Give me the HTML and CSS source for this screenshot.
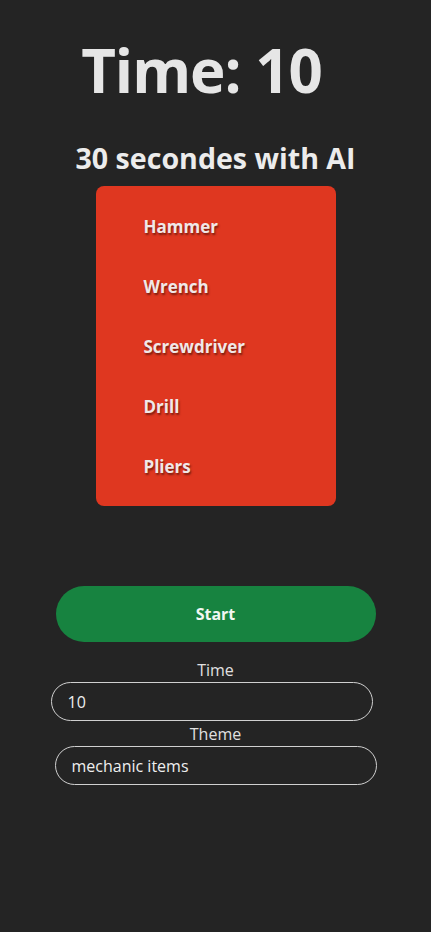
FILE: index.html
```html
<!DOCTYPE html>
<html lang="en">
<head>
<meta charset="utf-8">
<title>30 secondes with AI</title>
<link rel="stylesheet" href="styles.css">
</head>
<body>
<main class="app">
  <h1 class="timer">Time: 10</h1>
  <h2 class="subtitle">30 secondes with AI</h2>
  <ul class="card">
    <li class="item">Hammer</li>
    <li class="item">Wrench</li>
    <li class="item">Screwdriver</li>
    <li class="item">Drill</li>
    <li class="item">Pliers</li>
  </ul>
  <button class="start">Start</button>
  <form class="settings">
    <label class="label" for="time">Time</label>
    <input class="field field-time" id="time" type="text" value="10">
    <label class="label" for="theme">Theme</label>
    <input class="field" id="theme" type="text" value="mechanic items">
  </form>
</main>
</body>
</html>
```

FILE: styles.css
```css
html, body {
  margin: 0;
  padding: 0;
}
body {
  background: #242424;
  color: #e8e8e8;
  font-family: "Open Sans", "Noto Sans", sans-serif;
  min-height: 932px;
}
.app {
  display: flex;
  flex-direction: column;
  align-items: center;
  padding-top: 37px;
}
.timer {
  margin: 0 28px 0 0;
  font-size: 60px;
  line-height: 66px;
  letter-spacing: -1px;
  font-weight: 700;
  color: #e6e6e6;
}
.subtitle {
  margin: 40px 0 0 0;
  font-size: 28.6px;
  line-height: 30px;
  font-weight: 700;
  color: #ececec;
}
.card {
  list-style: none;
  margin: 13px 0 0 0;
  padding: 11px 0 9px 48px;
  width: 240px;
  height: 320px;
  box-sizing: border-box;
  background: #df3720;
  border-radius: 8px;
}
.item {
  height: 60px;
  line-height: 60px;
  font-size: 17px;
  font-weight: 700;
  color: #f0e8e8;
  text-shadow: 1px 2px 2px rgba(90, 20, 10, 0.75);
}
.start {
  margin-top: 80px;
  width: 320px;
  height: 56px;
  border: none;
  border-radius: 28px;
  background: #178340;
  color: #f2f7f2;
  font-family: inherit;
  font-size: 16px;
  font-weight: 700;
}
.settings {
  display: flex;
  flex-direction: column;
  align-items: center;
  margin-top: 18px;
}
.label {
  line-height: 20px;
  font-size: 16px;
  color: #e0e0e0;
  margin-bottom: 2px;
}
.field {
  box-sizing: border-box;
  width: 322px;
  height: 39px;
  margin: 0 0 3px 0;
  padding: 0 16px;
  border: 1px solid #d0d0d0;
  border-radius: 20px;
  background: #242424;
  color: #eeeeee;
  font-family: inherit;
  font-size: 16px;
  outline: none;
}
.field-time {
  margin-right: 8px;
}
```
